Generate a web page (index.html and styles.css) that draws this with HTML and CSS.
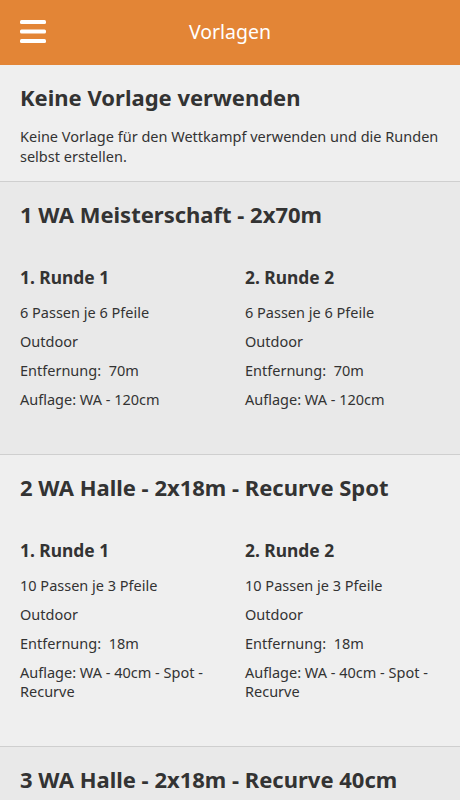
FILE: index.html
```html
<!DOCTYPE html>
<html lang="de">
<head>
<meta charset="utf-8">
<title>Vorlagen</title>
<link rel="stylesheet" href="styles.css">
</head>
<body>
<header class="topbar">
  <button class="menu-btn" aria-label="Menü">
    <svg width="26" height="23" viewBox="0 0 26 23"><rect x="0" y="0" width="26" height="4" rx="1.5" fill="#fff"/><rect x="0" y="9.5" width="26" height="4" rx="1.5" fill="#fff"/><rect x="0" y="19" width="26" height="4" rx="1.5" fill="#fff"/></svg>
  </button>
  <h1 class="topbar-title">Vorlagen</h1>
</header>
<main class="list">
  <section class="item item-light">
    <h2 class="item-title">Keine Vorlage verwenden</h2>
    <p class="item-desc">Keine Vorlage für den Wettkampf verwenden und die Runden selbst erstellen.</p>
  </section>
  <section class="item item-dark">
    <h2 class="item-title">1 WA Meisterschaft - 2x70m</h2>
    <div class="rounds">
      <div class="round">
        <h3 class="round-title">1. Runde 1</h3>
        <p class="line">6 Passen je 6 Pfeile</p>
        <p class="line">Outdoor</p>
        <p class="line">Entfernung:&nbsp; 70m</p>
        <p class="line">Auflage: WA - 120cm</p>
      </div>
      <div class="round">
        <h3 class="round-title">2. Runde 2</h3>
        <p class="line">6 Passen je 6 Pfeile</p>
        <p class="line">Outdoor</p>
        <p class="line">Entfernung:&nbsp; 70m</p>
        <p class="line">Auflage: WA - 120cm</p>
      </div>
    </div>
  </section>
  <section class="item item-light">
    <h2 class="item-title">2 WA Halle - 2x18m - Recurve Spot</h2>
    <div class="rounds">
      <div class="round">
        <h3 class="round-title">1. Runde 1</h3>
        <p class="line">10 Passen je 3 Pfeile</p>
        <p class="line">Outdoor</p>
        <p class="line">Entfernung:&nbsp; 18m</p>
        <p class="line">Auflage: WA - 40cm - Spot - Recurve</p>
      </div>
      <div class="round">
        <h3 class="round-title">2. Runde 2</h3>
        <p class="line">10 Passen je 3 Pfeile</p>
        <p class="line">Outdoor</p>
        <p class="line">Entfernung:&nbsp; 18m</p>
        <p class="line">Auflage: WA - 40cm - Spot - Recurve</p>
      </div>
    </div>
  </section>
  <section class="item item-dark">
    <h2 class="item-title">3 WA Halle - 2x18m - Recurve 40cm</h2>
  </section>
</main>
</body>
</html>
```
FILE: styles.css
```css
* { box-sizing: border-box; }
html, body { margin: 0; padding: 0; }
body {
  font-family: "Noto Sans", "Open Sans", sans-serif;
  background: #efefef;
  color: #333;
  width: 460px;
  height: 800px;
  overflow: hidden;
}
.topbar {
  height: 65px;
  background: #e38536;
  display: flex;
  align-items: center;
  justify-content: center;
  position: relative;
}
.menu-btn {
  position: absolute;
  left: 20px;
  top: 20px;
  padding: 0;
  border: 0;
  background: none;
  line-height: 0;
}
.topbar-title {
  margin: 0 0 2px;
  color: #fff;
  font-size: 19.5px;
  font-weight: 400;
  line-height: 28px;
}
.list { display: flex; flex-direction: column; }
.item {
  padding: 17px 20px 45px;
  border-bottom: 1px solid #cfcfcf;
}
.item:first-child { padding-bottom: 15px; }
.item-light { background: #efefef; }
.item-dark { background: #e9e9e9; }
.item-title {
  margin: 0;
  font-size: 22px;
  font-weight: 700;
  line-height: 30px;
  color: #333;
}
.item-desc {
  margin: 14px 0 0;
  font-size: 14.5px;
  line-height: 20px;
  color: #333;
}
.rounds {
  display: grid;
  grid-template-columns: 225px 1fr;
  margin-top: 36px;
}
.round-title {
  margin: 0 0 14px;
  font-size: 17.4px;
  font-weight: 700;
  line-height: 24px;
  color: #333;
}
.line {
  margin: 0 0 10px;
  font-size: 14.5px;
  line-height: 19px;
  color: #333;
}
.line:last-child { margin-bottom: 0; }
```
